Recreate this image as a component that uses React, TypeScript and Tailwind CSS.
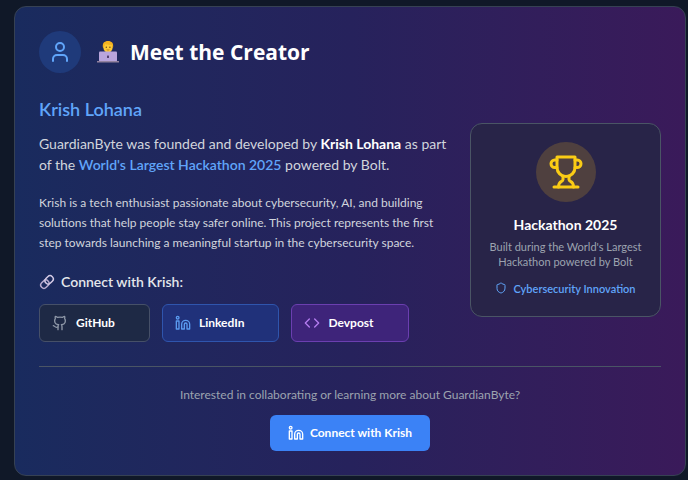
import { Code, Github, Linkedin, Shield, User } from 'lucide-react';

interface SocialLink {
  name: string;
  url: string;
  icon: typeof Github;
  box: string;
  iconColor: string;
}

const socialLinks: SocialLink[] = [
  {
    name: 'GitHub',
    url: '#github',
    icon: Github,
    box: 'bg-[#1e2945] border-[#465068]',
    iconColor: 'text-[#8f98a8]',
  },
  {
    name: 'LinkedIn',
    url: '#linkedin',
    icon: Linkedin,
    box: 'bg-[#20317a] border-[#2f55ad]',
    iconColor: 'text-[#5a9bf0]',
  },
  {
    name: 'Devpost',
    url: '#devpost',
    icon: Code,
    box: 'bg-[#3e247a] border-[#6b3fb0]',
    iconColor: 'text-[#b57df0]',
  },
];

function TechnologistEmoji() {
  return (
    <svg viewBox="0 0 22 22" className="w-[22px] h-[22px]" aria-hidden="true">
      <path d="M5 18v-4c0-2 1.500-3 4-3.500h4c2.500.5 4 1.500 4 3.500v4z" fill="#7e57a8" />
      <path d="M9.500 9h3v3h-3z" fill="#e0a020" />
      <ellipse cx="11" cy="6.300" rx="4.700" ry="5.200" fill="#fcc934" />
      <path d="M6 6.800C5 2 7.500 0 11 0s6 2 5 6.800c-.8-.8-1-2.300-1.300-3.300-2.500.8-5 .3-6.400-.5C8 4.500 7 6 6 6.800z" fill="#f5b21f" />
      <circle cx="9.300" cy="6.300" r=".7" fill="#6b4318" />
      <circle cx="12.900" cy="6.300" r=".7" fill="#6b4318" />
      <path d="M9.700 8.700q1.300.9 2.600 0" stroke="#a86418" strokeWidth=".7" fill="none" />
      <rect x="2" y="10.500" width="18" height="10" rx="1" fill="#b9a5dc" />
      <path d="M0 20h22v1.500H0z" fill="#93829f" />
      <rect x="10" y="14.500" width="2" height="2.500" rx=".5" fill="#53406f" />
    </svg>
  );
}

function LinkEmoji() {
  return (
    <svg viewBox="0 0 16 16" className="w-4 h-4" fill="none" aria-hidden="true">
      <g transform="rotate(-45 8 8)">
        <rect x="0.500" y="4.800" width="9" height="6.400" rx="3.200" stroke="#b9acd0" strokeWidth="1.500" />
        <rect x="6.500" y="4.800" width="9" height="6.400" rx="3.200" stroke="#d5cbe6" strokeWidth="1.500" />
      </g>
    </svg>
  );
}

function TrophyIcon() {
  return (
    <svg
      viewBox="0 0 24 24"
      className="w-9 h-9 text-[#facc15]"
      fill="none"
      stroke="currentColor"
      strokeWidth="2"
      strokeLinecap="round"
      strokeLinejoin="round"
      aria-hidden="true"
    >
      <path d="M6 9H4.500a2.500 2.500 0 0 1 0-5H6" />
      <path d="M18 9h1.500a2.500 2.500 0 0 0 0-5H18" />
      <path d="M4 22h16" />
      <path d="M10 14.660V17c0 .55-.47.98-.97 1.210C7.850 18.750 7 20.240 7 22" />
      <path d="M14 14.660V17c0 .55.47.98.97 1.210C16.150 18.750 17 20.240 17 22" />
      <path d="M18 2H6v7a6 6 0 0 0 12 0V2Z" />
    </svg>
  );
}

export default function App() {
  return (
    <div className="min-h-screen bg-gray-900 pt-[6px] pb-1 pl-[14px] pr-[2px] font-[Lato,'Open_Sans',sans-serif]">
      <section className="rounded-xl border border-gray-700 bg-linear-to-r from-[#192b5e] via-[#26225c] to-[#3a1a5a] p-6">
        <div className="flex items-center gap-4">
          <div className="rounded-full bg-[#1f3a7a] p-[9px]">
            <User className="w-6 h-6 text-[#60a5fa]" />
          </div>
          <h2 className="flex items-center gap-[11px] font-['Open_Sans',sans-serif] text-[21px] leading-7 font-bold text-white">
            <TechnologistEmoji />
            Meet the Creator
          </h2>
        </div>

        <div className="mt-6 grid grid-cols-[1fr_191px] items-center gap-4">
          <div>
            <h3 className="text-[18px] leading-6 font-semibold text-[#60a5fa]">Krish Lohana</h3>
            <p className="mt-3 text-[14px] leading-[21px] text-gray-300">
              GuardianByte was founded and developed by{' '}
              <strong className="font-bold text-white">Krish Lohana</strong> as part of the{' '}
              <strong className="font-semibold text-[#60a5fa]">World's Largest Hackathon 2025</strong>{' '}
              powered by Bolt.
            </p>
            <p className="mt-[18px] text-[12px] leading-5 text-gray-300">
              Krish is a tech enthusiast passionate about cybersecurity, AI, and building solutions
              that help people stay safer online. This project represents the first step towards
              launching a meaningful startup in the cybersecurity space.
            </p>

            <h4 className="mt-[18px] flex items-center gap-[6px] text-[14px] leading-[21px] font-semibold text-gray-200">
              <LinkEmoji />
              Connect with Krish:
            </h4>
            <div className="mt-3 flex flex-wrap gap-3">
              {socialLinks.map((link) => (
                <a
                  key={link.name}
                  href={link.url}
                  className={`flex items-center gap-2 rounded-md border py-[9px] pl-3 pr-[34px] text-[12px] leading-[18px] font-bold text-white ${link.box}`}
                >
                  <link.icon className={`w-4 h-4 ${link.iconColor}`} />
                  {link.name}
                </a>
              ))}
            </div>
          </div>

          <div className="flex flex-col items-center rounded-xl border border-gray-600 bg-[#282448] px-4 pt-[18px] pb-5 text-center">
            <div className="rounded-full bg-[#4f403f] p-3">
              <TrophyIcon />
            </div>
            <h4 className="mt-3 text-[14px] leading-[21px] font-bold text-white">Hackathon 2025</h4>
            <p className="mt-1 text-[11px] leading-[15px] text-[#9ca3af]">
              Built during the World's Largest Hackathon powered by Bolt
            </p>
            <div className="mt-3 flex items-center gap-[6px] text-[11px] leading-[15px] font-semibold text-[#60a5fa]">
              <Shield className="w-3 h-3" />
              Cybersecurity Innovation
            </div>
          </div>
        </div>

        <div className="mt-6 flex flex-col items-center border-t border-gray-600 pt-[18px]">
          <p className="text-[12px] leading-5 text-[#9ca3af]">
            Interested in collaborating or learning more about GuardianByte?
          </p>
          <a
            href="#connect"
            className="mt-[10px] flex items-center gap-[6px] rounded-md bg-[#3b82f6] px-[18px] py-[9px] text-[12px] leading-[18px] font-bold text-white"
          >
            <Linkedin className="w-4 h-4" />
            Connect with Krish
          </a>
        </div>
      </section>
    </div>
  );
}
